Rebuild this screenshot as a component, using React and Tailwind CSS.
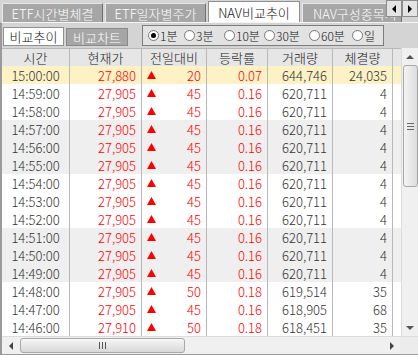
import React from 'react'

const rows = [
  ['15:00:00', '27,880', '20', '0.07', '644,746', '24,035'],
  ['14:59:00', '27,905', '45', '0.16', '620,711', '4'],
  ['14:58:00', '27,905', '45', '0.16', '620,711', '4'],
  ['14:57:00', '27,905', '45', '0.16', '620,711', '4'],
  ['14:56:00', '27,905', '45', '0.16', '620,711', '4'],
  ['14:55:00', '27,905', '45', '0.16', '620,711', '4'],
  ['14:54:00', '27,905', '45', '0.16', '620,711', '4'],
  ['14:53:00', '27,905', '45', '0.16', '620,711', '4'],
  ['14:52:00', '27,905', '45', '0.16', '620,711', '4'],
  ['14:51:00', '27,905', '45', '0.16', '620,711', '4'],
  ['14:50:00', '27,905', '45', '0.16', '620,711', '4'],
  ['14:49:00', '27,905', '45', '0.16', '620,711', '4'],
  ['14:48:00', '27,905', '50', '0.18', '619,514', '35'],
  ['14:47:00', '27,905', '45', '0.16', '618,905', '68'],
  ['14:46:00', '27,910', '50', '0.18', '618,451', '35'],
]

const tabs = ['ETF시간별체결', 'ETF일자별주가', 'NAV비교추이', 'NAV구성종목시']
const radios = [
  ['1분', 'w-[36px]'],
  ['3분', 'w-[40px]'],
  ['10분', 'w-[40px]'],
  ['30분', 'w-[45px]'],
  ['60분', 'w-[43px]'],
  ['일', 'w-[26px]'],
]
const cols = 'grid grid-cols-[68px_72px_65px_61px_65px_60px_1fr]'

function Tri({ dir, className = '' }) {
  const pts = {
    up: '0,6 4,2 8,6',
    down: '0,2 4,6 8,2',
    left: '6,0 2,4 6,8',
    right: '2,0 6,4 2,8',
  }[dir]
  return (
    <svg width="8" height="8" viewBox="0 0 8 8" className={className}>
      <polygon points={pts} fill="currentColor" />
    </svg>
  )
}

function Grip({ vertical }) {
  return vertical ? (
    <div className="flex flex-col gap-[2px]">
      <div className="w-[7px] h-px bg-[#666]" />
      <div className="w-[7px] h-px bg-[#666]" />
      <div className="w-[7px] h-px bg-[#666]" />
    </div>
  ) : (
    <div className="flex gap-[2px]">
      <div className="w-px h-[7px] bg-[#555]" />
      <div className="w-px h-[7px] bg-[#555]" />
      <div className="w-px h-[7px] bg-[#555]" />
    </div>
  )
}

export default function App() {
  return (
    <div
      className="w-[418px] h-[355px] overflow-hidden bg-[#d4d4d4] flex flex-col text-[13px] leading-none font-light"
      style={{ fontFamily: '"Noto Sans CJK KR", "Noto Sans", sans-serif' }}
    >
      {/* top tabs */}
      <div className="h-[22px] flex items-end pl-[2px] bg-[#d4d4d4] relative">
        {tabs.map((t, i) =>
          i === 2 ? (
            <div key={t} className="w-[92px] h-[21px] mr-[2px] bg-white border-t border-l border-r border-[#909090] flex items-center justify-center text-[#111]">
              {t}
            </div>
          ) : (
            <div
              key={t}
              className={`${i === 3 ? 'w-[100px] justify-start pl-[10px]' : 'w-[101px] justify-center'} h-[19px] mr-[2px] bg-[#a6a6a6] border-t border-l border-[#e8e8e8] border-r border-r-[#707070] flex items-center text-white whitespace-nowrap overflow-hidden`}
            >
              {t}
            </div>
          )
        )}
        <div className="absolute right-0 top-0 flex">
          <div className="w-[16px] h-[17px] bg-[#e4e4e4] border border-[#8c8c8c] flex items-center justify-center text-black">
            <Tri dir="left" />
          </div>
          <div className="w-[16px] h-[17px] bg-[#e4e4e4] border border-[#8c8c8c] flex items-center justify-center text-black">
            <Tri dir="right" />
          </div>
        </div>
      </div>

      {/* panel */}
      <div className="flex-1 flex flex-col border-t border-[#f4f4f4] border-l-2 border-l-[#9a9a9a]">
        {/* sub row */}
        <div className="h-[24px] flex items-end pb-[1px]">
          <div className="w-[61px] h-[19px] ml-[1px] bg-white border border-[#909090] flex items-center justify-center text-[#111]">
            비교추이
          </div>
          <div className="w-[62px] h-[18px] ml-[2px] bg-[#a6a6a6] border border-[#8a8a8a] flex items-center justify-center text-white">
            비교차트
          </div>
          <div className="ml-[14px] w-[242px] h-[21px] bg-[#e2e2e2] border border-[#7c7c7c] flex items-center pl-[5px] text-[#111]">
            {radios.map(([r, w], i) => (
              <div key={r} className={`${w} flex items-center gap-[1px]`}>
                <div className="w-[11px] h-[11px] shrink-0 rounded-full bg-white border border-[#777] flex items-center justify-center">
                  {i === 0 && <div className="w-[5px] h-[5px] rounded-full bg-black" />}
                </div>
                <span className="text-[12px]">{r}</span>
              </div>
            ))}
          </div>
        </div>

        {/* grid + v scroll */}
        <div className="flex mt-[1px]">
          <div className="w-[399px] flex flex-col">
            <div className={`${cols} h-[18px] bg-[#e6e6e6] border-t border-[#b8b8b8] text-[#222]`}>
              {['시간', '현재가', '전일대비', '등락률', '거래량', '체결량', ''].map((h, i) => (
                <div key={i} className={`flex items-center justify-center ${i < 6 ? 'border-r border-[#b8b8b8]' : ''}`}>
                  {h}
                </div>
              ))}
            </div>
            {rows.map((r, i) => {
              const bg = i === 0 ? 'bg-[#fdf1c6]' : Math.floor(i / 3) % 2 === 1 ? 'bg-[#efefef]' : 'bg-white'
              return (
                <div key={r[0]} className={`${cols} h-[18px] ${bg}`}>
                  <div className="flex items-center justify-center border-r border-[#b8b8b8] text-[#333]">{r[0]}</div>
                  <div className="flex items-center justify-end pr-[5px] border-r border-[#b8b8b8] text-[#ff0000]">{r[1]}</div>
                  <div className="flex items-center justify-between pl-[5px] pr-[5px] border-r border-[#b8b8b8] text-[#ff0000]">
                    <svg width="9" height="8" viewBox="0 0 9 8">
                      <polygon points="4.5,0 9,8 0,8" fill="#ff0000" />
                    </svg>
                    <span>{r[2]}</span>
                  </div>
                  <div className="flex items-center justify-end pr-[5px] border-r border-[#b8b8b8] text-[#ff0000]">{r[3]}</div>
                  <div className="flex items-center justify-end pr-[5px] border-r border-[#b8b8b8] text-[#333]">{r[4]}</div>
                  <div className="flex items-center justify-end pr-[5px] border-r border-[#b8b8b8] text-[#333]">{r[5]}</div>
                  <div />
                </div>
              )
            })}
          </div>
          {/* vertical scrollbar */}
          <div className="w-[17px] h-[288px] bg-[#f0f0f0] border-l border-[#dcdcdc] flex flex-col items-center">
            <div className="h-[17px] flex items-center justify-center text-[#555]">
              <Tri dir="up" />
            </div>
            <div className="w-[15px] h-[122px] rounded-[3px] bg-gradient-to-r from-[#f4f4f4] to-[#dcdcdc] border border-[#a8a8a8] flex items-center justify-center">
              <Grip vertical />
            </div>
            <div className="flex-1" />
            <div className="h-[17px] flex items-center justify-center text-[#555]">
              <Tri dir="down" />
            </div>
          </div>
        </div>

        {/* horizontal scrollbar */}
        <div className="flex h-[18px] bg-[#f0f0f0] border-t border-[#dcdcdc]">
          <div className="w-[398px] flex items-center">
            <div className="w-[18px] flex items-center justify-center text-[#444]">
              <Tri dir="left" />
            </div>
            <div className="w-[165px] h-[15px] rounded-[3px] bg-gradient-to-b from-[#f6f6f6] to-[#d8d8d8] border border-[#a8a8a8] flex items-center justify-center">
              <Grip />
            </div>
            <div className="flex-1" />
            <div className="w-[16px] flex items-center justify-center text-[#444]">
              <Tri dir="right" />
            </div>
          </div>
          <div className="flex-1 bg-[#ececec]" />
        </div>
        <div className="flex-1 bg-[#9a9a9a]" />
      </div>
    </div>
  )
}
